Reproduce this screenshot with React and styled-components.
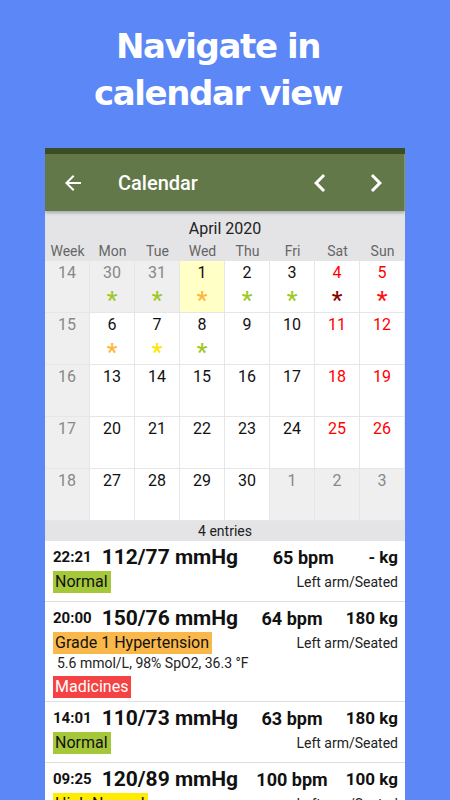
import React from "react";
import styled, { createGlobalStyle } from "styled-components";

const GlobalStyle = createGlobalStyle`
  html, body {
    margin: 0;
    padding: 0;
    background: #5b87f7;
    overflow: hidden;
  }
  * { box-sizing: border-box; }
`;

const Page = styled.div`
  width: 450px;
  height: 800px;
  display: flex;
  flex-direction: column;
  overflow: hidden;
`;

const Headline = styled.h1`
  margin: 0;
  height: 148px;
  padding: 23px 14px 0 0;
  text-align: center;
  font-family: "DejaVu Sans", sans-serif;
  font-weight: bold;
  font-size: 34px;
  line-height: 47px;
  letter-spacing: -1.4px;
  color: #fff;
`;

const Phone = styled.div`
  margin-left: 45px;
  width: 360px;
  flex: 1;
  background: #fff;
  overflow: hidden;
  font-family: Roboto, "Noto Sans", sans-serif;
  color: #111;
`;

const StatusBar = styled.div`
  height: 6px;
  background: #3a4d24;
`;

const Toolbar = styled.div`
  position: relative;
  height: 57px;
  display: flex;
  align-items: center;
  padding: 0 10px 0 16px;
  background: #627848;
  border-right: 1px solid #8d9a35;
  box-shadow: 0 2px 3px rgba(0, 0, 0, 0.25);
  color: #fff;
  z-index: 1;
`;

const ToolbarTitle = styled.div`
  margin-left: 33px;
  flex: 1;
  font-size: 20px;
  font-weight: 500;
`;

const NavButtons = styled.div`
  display: flex;
  gap: 20px;
`;

const CalHead = styled.div`
  background: #e4e4e6;
`;

const MonthTitle = styled.div`
  height: 27px;
  padding-top: 5px;
  line-height: 26px;
  text-align: center;
  font-size: 16px;
  color: #222;
`;

const Grid = styled.div`
  display: grid;
  grid-template-columns: repeat(8, 45px);
`;

const DayName = styled.div`
  height: 23px;
  padding-top: 3px;
  line-height: 20px;
  text-align: center;
  font-size: 14px;
  color: #666;
`;

const Cell = styled.div`
  height: 52px;
  padding-top: 2px;
  display: flex;
  flex-direction: column;
  align-items: center;
  border-right: 1px solid #e6e6e6;
  border-bottom: 1px solid #e6e6e6;
  background: ${({ $bg }) => $bg || "#fff"};
`;

const DayNum = styled.div`
  font-size: 16px;
  line-height: 20px;
  color: ${({ $color }) => $color};
`;

const Mark = styled.div`
  margin-top: 7px;
  font-size: 24px;
  font-weight: 500;
  line-height: 20px;
  color: ${({ $color }) => $color};
`;

const EntriesBar = styled.div`
  height: 20px;
  line-height: 21px;
  text-align: center;
  font-size: 14px;
  color: #222;
  background: #e4e4e6;
`;

const Entry = styled.div`
  padding: 4px 7px 3px 8px;
  border-bottom: 1px solid #dedede;
`;

const TopRow = styled.div`
  height: 24px;
  display: flex;
  align-items: center;
  justify-content: space-between;
  font-weight: bold;
`;

const Reading = styled.div`
  display: flex;
  align-items: center;
  gap: 10px;
`;

const Time = styled.span`
  font-size: 15px;
`;

const Pressure = styled.span`
  font-size: 21px;
`;

const Pulse = styled.span`
  font-size: 18px;
`;

const Weight = styled.span`
  font-size: 17px;
`;

const BadgeRow = styled.div`
  margin-top: 2px;
  margin-bottom: 5px;
  display: flex;
  align-items: center;
  justify-content: space-between;
`;

const Badge = styled.span`
  display: inline-block;
  height: 22px;
  line-height: 22px;
  padding: 0 3px 0 2px;
  font-size: 16px;
  background: ${({ $bg }) => $bg};
  color: ${({ $fg }) => $fg || "#111"};
`;

const Position = styled.span`
  font-size: 14px;
  color: #222;
`;

const Note = styled.div`
  margin-top: -4px;
  padding-left: 4px;
  font-size: 14px;
  line-height: 16px;
  color: #222;
`;

const MedRow = styled.div`
  margin-top: 5px;
`;

const GREEN = "#9ec826";
const ORANGE = "#ffb43a";
const YELLOW = "#ffe600";
const DARKRED = "#8b0000";
const RED = "#ff1111";

const weeks = [
  { n: 14, days: [[30, 1, GREEN], [31, 1, GREEN], [1, 0, ORANGE, true], [2, 0, GREEN], [3, 0, GREEN], [4, 0, DARKRED], [5, 0, RED]] },
  { n: 15, days: [[6, 0, ORANGE], [7, 0, YELLOW], [8, 0, GREEN], [9], [10], [11], [12]] },
  { n: 16, days: [[13], [14], [15], [16], [17], [18], [19]] },
  { n: 17, days: [[20], [21], [22], [23], [24], [25], [26]] },
  { n: 18, days: [[27], [28], [29], [30], [1, 1], [2, 1], [3, 1]] },
];

const entries = [
  { time: "22:21", bp: "112/77 mmHg", pulse: "65 bpm", kg: "- kg", tag: "Normal", tagBg: "#a5c83a" },
  {
    time: "20:00", bp: "150/76 mmHg", pulse: "64 bpm", kg: "180 kg", tag: "Grade 1 Hypertension", tagBg: "#fbb84a",
    note: "5.6 mmol/L, 98% SpO2, 36.3 °F", med: "Madicines",
  },
  { time: "14:01", bp: "110/73 mmHg", pulse: "63 bpm", kg: "180 kg", tag: "Normal", tagBg: "#a5c83a" },
  { time: "09:25", bp: "120/89 mmHg", pulse: "100 bpm", kg: "100 kg", tag: "High Normal", tagBg: "#ffec00" },
];

function Icon({ d }) {
  return (
    <svg width="36" height="36" viewBox="0 0 24 24" fill="#fff">
      <path d={d} />
    </svg>
  );
}

function CalendarGrid() {
  return (
    <>
      <CalHead>
        <MonthTitle>April 2020</MonthTitle>
        <Grid>
          {["Week", "Mon", "Tue", "Wed", "Thu", "Fri", "Sat", "Sun"].map((d) => (
            <DayName key={d}>{d}</DayName>
          ))}
        </Grid>
      </CalHead>
      <Grid>
        {weeks.map((w) => (
          <React.Fragment key={w.n}>
            <Cell $bg="#efefef">
              <DayNum $color="#888">{w.n}</DayNum>
            </Cell>
            {w.days.map(([day, out, mark, today], i) => {
              const color = out ? "#888" : i >= 5 ? "#ff0000" : "#111";
              const bg = today ? "#ffffc6" : out ? "#efefef" : "#fff";
              return (
                <Cell key={i} $bg={bg}>
                  <DayNum $color={color}>{day}</DayNum>
                  {mark && <Mark $color={mark}>*</Mark>}
                </Cell>
              );
            })}
          </React.Fragment>
        ))}
      </Grid>
    </>
  );
}

export default function App() {
  return (
    <Page>
      <GlobalStyle />
      <Headline>
        Navigate in
        <br />
        calendar view
      </Headline>
      <Phone>
        <StatusBar />
        <Toolbar>
          <svg width="24" height="24" viewBox="0 0 24 24" fill="#fff">
            <path d="M20 11H7.83l5.59-5.59L12 4l-8 8 8 8 1.41-1.41L7.83 13H20v-2z" />
          </svg>
          <ToolbarTitle>Calendar</ToolbarTitle>
          <NavButtons>
            <Icon d="M15.41 7.41L14 6l-6 6 6 6 1.41-1.41L10.83 12z" />
            <Icon d="M10 6L8.59 7.41 13.17 12l-4.58 4.59L10 18l6-6z" />
          </NavButtons>
        </Toolbar>
        <CalendarGrid />
        <EntriesBar>4 entries</EntriesBar>
        {entries.map((e) => (
          <Entry key={e.time}>
            <TopRow>
              <Reading>
                <Time>{e.time}</Time>
                <Pressure>{e.bp}</Pressure>
              </Reading>
              <Pulse>{e.pulse}</Pulse>
              <Weight>{e.kg}</Weight>
            </TopRow>
            <BadgeRow>
              <Badge $bg={e.tagBg}>{e.tag}</Badge>
              <Position>Left arm/Seated</Position>
            </BadgeRow>
            {e.note && <Note>{e.note}</Note>}
            {e.med && (
              <MedRow>
                <Badge $bg="#f54343" $fg="#fff">{e.med}</Badge>
              </MedRow>
            )}
          </Entry>
        ))}
      </Phone>
    </Page>
  );
}
